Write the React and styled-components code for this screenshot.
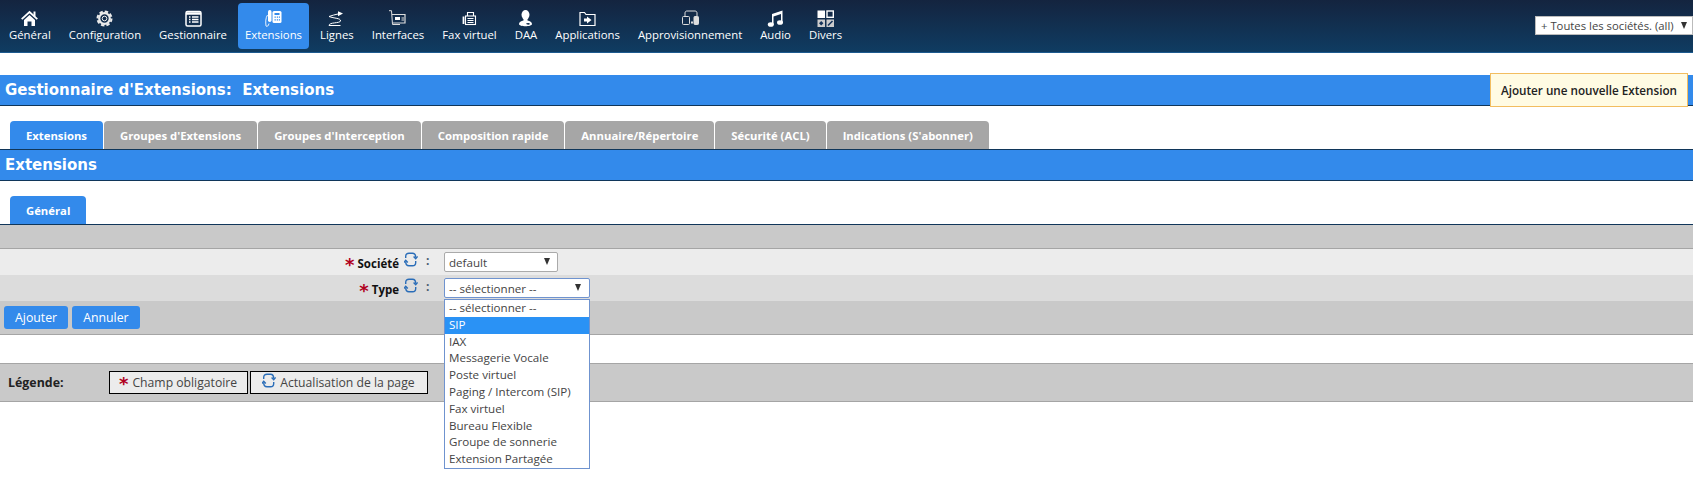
import React from 'react';
import styled, { createGlobalStyle } from 'styled-components';

const Global = createGlobalStyle`
  html, body {
    margin: 0;
    padding: 0;
    background: #fff;
    font-family: 'Open Sans', 'Noto Sans', sans-serif;
    font-size: 12px;
  }
`;

const Page = styled.div`
  width: 1693px;
  height: 477px;
  overflow: hidden;
  position: relative;
`;

const TopBar = styled.div`
  height: 52px;
  background: linear-gradient(#14243f, #0f3c62);
  border-bottom: 1px solid #1d5a8f;
  display: flex;
  justify-content: space-between;
  padding-left: 2px;
`;

const Nav = styled.div`
  display: flex;
  gap: 4px;
  align-items: flex-start;
  padding-top: 3px;
`;

const NavItem = styled.div`
  height: 46px;
  padding: 0 7px;
  border-radius: 4px;
  background: ${(p) => (p.$active ? '#338aeb' : 'transparent')};
  color: #fff;
  display: flex;
  flex-direction: column;
  align-items: center;
  white-space: nowrap;
  font-size: 11.35px;
  line-height: 16px;
  svg {
    display: block;
    width: 17px;
    height: 17px;
    margin-top: 7px;
  }
`;

const CompanySelect = styled.div`
  width: 158px;
  height: 19px;
  margin-top: 16px;
  box-sizing: border-box;
  background: #fff;
  border: 1px solid #bbb;
  color: #444;
  font-size: 11.3px;
  line-height: 17px;
  padding-left: 5px;
  display: flex;
  justify-content: space-between;
`;

const Caret = styled.span`
  width: 0;
  height: 0;
  border-left: 3.5px solid transparent;
  border-right: 3.5px solid transparent;
  border-top: 7px solid #333;
  margin: 5px ${(p) => p.$right || 5}px 0 0;
`;

const TitleBar = styled.div`
  margin-top: 22px;
  height: 30px;
  background: #338aeb;
  border-bottom: 1px solid #10365a;
  position: relative;
  color: #fff;
  font-family: 'DejaVu Sans', sans-serif;
  font-weight: 700;
  font-size: 15px;
  line-height: 30px;
  padding-left: 5px;
  white-space: pre;
`;

const AddButton = styled.div`
  position: absolute;
  right: 5px;
  top: -2px;
  width: 198px;
  height: 34px;
  box-sizing: border-box;
  background: #fffbe3;
  border: 1px solid #f2bd60;
  color: #222;
  font-family: 'Open Sans', sans-serif;
  font-size: 11.7px;
  font-weight: 600;
  line-height: 32px;
  text-align: center;
`;

const Tabs = styled.div`
  display: flex;
  gap: 1px;
  padding: 15px 0 0 10px;
`;

const Tab = styled.div`
  height: 28px;
  padding: 0 16px;
  border-radius: 4px 4px 0 0;
  background: ${(p) => (p.$active ? '#338aeb' : '#a6a6a6')};
  color: #fff;
  font-weight: 700;
  font-size: 11.3px;
  line-height: 29px;
  white-space: nowrap;
`;

const SectionBar = styled.div`
  height: 30px;
  background: #338aeb;
  border-top: 1px solid #10365a;
  border-bottom: 1px solid #10365a;
  color: #fff;
  font-family: 'DejaVu Sans', sans-serif;
  font-weight: 700;
  font-size: 15px;
  line-height: 30px;
  padding-left: 5px;
`;

const GreyBand = styled.div`
  height: 23px;
  background: #c9c9c9;
  border-top: 1px solid #10365a;
  border-bottom: 1px solid #a5a5a5;
`;

const FormRow = styled.div`
  height: 26px;
  background: ${(p) => (p.$dark ? '#dcdcdc' : '#ececec')};
  display: flex;
  align-items: center;
`;

const Label = styled.div`
  width: 418px;
  flex: none;
  display: flex;
  justify-content: flex-end;
  align-items: center;
  padding-top: 3px;
  font-weight: 700;
  font-size: 11.5px;
  color: #111;
  gap: 3px;
  svg {
    margin: -8px 0 0 2px;
  }
`;

const Star = styled.span`
  color: #b00020;
  font-size: 18px;
  line-height: 12px;
  padding-top: 3px;
  font-weight: 700;
  font-family: 'DejaVu Sans', sans-serif;
`;

const Colon = styled.span`
  font-weight: 700;
  color: #4a5a70;
  width: 3px;
  margin: -3px 15px 0 8px;
`;

const Select = styled.div`
  width: ${(p) => p.$width}px;
  height: 20px;
  box-sizing: border-box;
  background: #fff;
  border: 1px solid ${(p) => (p.$focus ? '#6f93cf' : '#aaa')};
  border-radius: 2px;
  color: #444;
  font-size: 11.6px;
  line-height: 20px;
  padding-left: 4px;
  display: flex;
  justify-content: space-between;
`;

const ButtonBand = styled.div`
  height: 33px;
  background: #c9c9c9;
  border-bottom: 1px solid #a5a5a5;
  display: flex;
  align-items: center;
  gap: 4px;
  padding-left: 4px;
`;

const Button = styled.div`
  height: 23px;
  padding: 0 11px;
  background: #338aeb;
  border-radius: 3px;
  color: #fff;
  font-size: 12.3px;
  line-height: 23px;
`;

const Legend = styled.div`
  margin-top: 28px;
  height: 37px;
  background: #c9c9c9;
  border-top: 1px solid #a5a5a5;
  border-bottom: 1px solid #a5a5a5;
  display: flex;
  align-items: center;
  padding-left: 8px;
`;

const LegendTitle = styled.div`
  width: 101px;
  font-weight: 700;
  font-size: 12.4px;
  color: #222;
`;

const LegendBox = styled.div`
  height: 23px;
  box-sizing: border-box;
  border: 1px solid #000;
  background: #ececec;
  color: #444;
  padding: 0 ${(p) => p.$right}px 0 ${(p) => p.$left}px;
  margin-right: 2px;
  display: flex;
  align-items: center;
  gap: 4px;
  font-size: 12.2px;
  white-space: nowrap;
  svg {
    margin-top: -4px;
  }
`;

const Dropdown = styled.div`
  position: absolute;
  left: 444px;
  top: 299px;
  width: 146px;
  box-sizing: border-box;
  background: #fff;
  border: 1px solid #6f93cf;
`;

const Option = styled.div`
  height: 16.8px;
  line-height: 16.8px;
  padding-left: 4px;
  font-size: 11.6px;
  color: ${(p) => (p.$selected ? '#fff' : '#444')};
  background: ${(p) => (p.$selected ? '#2a92f5' : 'transparent')};
`;

const Refresh = () => (
  <svg width="14" height="15" viewBox="0 0 14 15" fill="none" stroke="#2a6db8" strokeWidth="1.4">
    <path d="M1.700 6V4.500C1.700 2.500 3 1.200 5 1.200H8.500C10.500 1.200 11.700 2.500 11.700 5.500" />
    <path d="M9.600 4.500L11.700 6.800L13.600 4.500" />
    <path d="M11.700 9V10.500C11.700 12.500 10.500 13.800 8.500 13.800H5C3 13.800 1.700 12.500 1.700 9.500" />
    <path d="M-0.200 10.500L1.700 8.200L3.800 10.500" />
  </svg>
);

const icons = {
  home: (
    <svg viewBox="0 0 17 17" fill="#fff">
      <path d="M0.700 9.200L8.500 2L16.300 9.200" fill="none" stroke="#fff" strokeWidth="1.800" />
      <path d="M12.500 1.500H14.500V6.500H12.500z" />
      <path d="M3 10L8.500 5L14 10V16H10.500V11.500H6.500V16H3z" />
    </svg>
  ),
  gear: (
    <svg viewBox="0 0 17 17" fill="none" stroke="#ececec">
      <circle cx="8.500" cy="8.500" r="7" strokeWidth="2" strokeDasharray="3.500 2" />
      <circle cx="8.500" cy="8.500" r="5.300" strokeWidth="2.200" />
      <circle cx="8.500" cy="8.500" r="2.300" strokeWidth="1" />
    </svg>
  ),
  list: (
    <svg viewBox="0 0 17 17" fill="none" stroke="#fff">
      <rect x="1" y="1.500" width="15" height="14.500" rx="1.500" strokeWidth="1.500" />
      <path d="M1 3.500H16" strokeWidth="2.500" />
      <path d="M4 7H5.500M7 7H13.500M4 9.500H5.500M7 9.500H13.500M4 12H5.500M7 12H13.500" strokeWidth="1.300" />
    </svg>
  ),
  phone: (
    <svg viewBox="0 0 17 17" fill="#fff">
      <rect x="3" y="0" width="3.500" height="12" rx="1.700" />
      <path d="M2.500 5C0.500 8 0.500 12 1 16" fill="none" stroke="#fff" strokeWidth="0.900" />
      <path d="M1 16C2 17 3.500 16 4 13.500" fill="none" stroke="#fff" strokeWidth="0.900" />
      <rect x="7.500" y="1" width="9" height="12" rx="1.500" />
      <path d="M9.500 3H14.500V5H9.500zM9.500 6.500H10.800V7.800H9.500zM11.800 6.500H13V7.800H11.800zM13.800 6.500H15V7.800H13.800zM9.500 9.300H10.800V10.600H9.500zM11.800 9.300H13V10.600H11.800zM13.800 9.300H15V10.600H13.800z" fill="#338aeb" />
    </svg>
  ),
  route: (
    <svg viewBox="0 0 17 17" fill="none" stroke="#fff" strokeWidth="1">
      <path d="M1 6.500C4 5.500 7 4.500 10 4" />
      <path d="M10 1.300L15 3.500L10 6.300z" fill="#fff" stroke="none" />
      <path d="M1 6.500C6 8.500 13 8 12.500 11C12 13.500 1 12 1 15.500H12.500" />
    </svg>
  ),
  card: (
    <svg viewBox="0 0 17 17" fill="none" stroke="#ddd" strokeWidth="1">
      <path d="M0 0.700H2.500L3.500 14.500H11" />
      <path d="M3 4.500H16V13H3.500" strokeWidth="1.200" />
      <path d="M6 7H11V10H6z" fill="#fff" stroke="none" />
      <path d="M12.500 8H15M12.500 10H15" />
    </svg>
  ),
  fax: (
    <svg viewBox="0 0 17 17" fill="none" stroke="#fff" strokeWidth="1.100">
      <rect x="4.500" y="6" width="10" height="8.500" />
      <path d="M6.500 6V2.500H12.500V6" />
      <path d="M2.500 6.500V14" strokeWidth="1.800" />
      <path d="M6.500 8.500H12.500M6.500 10.500H12.500M6.500 12.500H12.500" />
    </svg>
  ),
  user: (
    <svg viewBox="0 0 17 17" fill="#fff">
      <ellipse cx="8.500" cy="4.800" rx="4" ry="4.800" />
      <path d="M6.500 8.500H10.500V10.500C13 11 15 12 15 14C15 17 2 17 2 14C2 12 4 11 6.500 10.500z" />
      <path d="M9 13.500C10.500 12.500 12.500 13 13 14C12 15 10 15 9 13.500z" fill="#14304f" />
    </svg>
  ),
  folder: (
    <svg viewBox="0 0 17 17" fill="none" stroke="#fff" strokeWidth="1.200">
      <path d="M1 2.500V15.500H16V4.500H7L5.500 2.500z" />
      <path d="M5 8.500H8V6.500L12.500 10L8 13.500V11.500H5z" fill="#fff" stroke="none" />
    </svg>
  ),
  devices: (
    <svg viewBox="0 0 17 17" fill="none" stroke="#ddd" strokeWidth="1">
      <path d="M3 6V3C3 1.500 4 1 5 1H13C14.500 1 15 2 15 3V6" />
      <rect x="0.500" y="6.500" width="7" height="8" rx="1" />
      <rect x="12" y="6.500" width="4.500" height="8" rx="0.800" fill="#ddd" />
      <path d="M9 12.500H11" strokeWidth="2" />
    </svg>
  ),
  music: (
    <svg viewBox="0 0 17 17" fill="#fff">
      <path d="M5 4L15.500 0.500V12.500H14V4L6.500 6.500V15H5z" />
      <ellipse cx="3.800" cy="14.500" rx="3" ry="2.300" />
      <ellipse cx="13" cy="12.500" rx="3" ry="2.300" />
    </svg>
  ),
  grid: (
    <svg viewBox="0 0 17 17">
      <rect x="0.500" y="0.500" width="7.500" height="7.500" fill="#fff" />
      <rect x="10" y="1" width="6.300" height="6.300" fill="none" stroke="#fff" strokeWidth="1.400" />
      <rect x="0.500" y="9.500" width="7.500" height="7.500" fill="#ccc" />
      <rect x="9.500" y="9.500" width="7.500" height="7.500" fill="#ccc" />
      <path d="M4.200 11L6.400 13.200L4.200 15.400L2 13.200z" fill="#14335a" />
      <path d="M11 15.500L15.500 11" stroke="#14335a" strokeWidth="1.600" />
    </svg>
  ),
};

const navItems = [
  ['Général', 'home'],
  ['Configuration', 'gear'],
  ['Gestionnaire', 'list'],
  ['Extensions', 'phone'],
  ['Lignes', 'route'],
  ['Interfaces', 'card'],
  ['Fax virtuel', 'fax'],
  ['DAA', 'user'],
  ['Applications', 'folder'],
  ['Approvisionnement', 'devices'],
  ['Audio', 'music'],
  ['Divers', 'grid'],
];

const tabs = [
  'Extensions',
  "Groupes d'Extensions",
  "Groupes d'Interception",
  'Composition rapide',
  'Annuaire/Répertoire',
  'Sécurité (ACL)',
  "Indications (S'abonner)",
];

const options = [
  '-- sélectionner --',
  'SIP',
  'IAX',
  'Messagerie Vocale',
  'Poste virtuel',
  'Paging / Intercom (SIP)',
  'Fax virtuel',
  'Bureau Flexible',
  'Groupe de sonnerie',
  'Extension Partagée',
];

const App = () => {
  return (
    <Page>
      <Global />
      <TopBar>
        <Nav>
          {navItems.map(([name, icon]) => (
            <NavItem key={name} $active={name === 'Extensions'}>
              {icons[icon]}
              {name}
            </NavItem>
          ))}
        </Nav>
        <CompanySelect>
          + Toutes les sociétés. (all)
          <Caret />
        </CompanySelect>
      </TopBar>

      <TitleBar>
        {"Gestionnaire d'Extensions:  Extensions"}
        <AddButton>Ajouter une nouvelle Extension</AddButton>
      </TitleBar>

      <Tabs>
        {tabs.map((tab, i) => (
          <Tab key={tab} $active={i === 0}>{tab}</Tab>
        ))}
      </Tabs>
      <SectionBar>Extensions</SectionBar>

      <Tabs>
        <Tab $active>Général</Tab>
      </Tabs>
      <GreyBand />

      <FormRow>
        <Label><Star>*</Star> Société <Refresh /></Label>
        <Colon>:</Colon>
        <Select $width={114}>default<Caret $right={7} /></Select>
      </FormRow>
      <FormRow $dark>
        <Label><Star>*</Star> Type <Refresh /></Label>
        <Colon>:</Colon>
        <Select $width={146} $focus>-- sélectionner --<Caret $right={8} /></Select>
      </FormRow>
      <ButtonBand>
        <Button>Ajouter</Button>
        <Button>Annuler</Button>
      </ButtonBand>

      <Legend>
        <LegendTitle>Légende:</LegendTitle>
        <LegendBox $left={9} $right={10}><Star>*</Star> Champ obligatoire</LegendBox>
        <LegendBox $left={11} $right={12}><Refresh /> Actualisation de la page</LegendBox>
      </Legend>

      <Dropdown>
        {options.map((o) => (
          <Option key={o} $selected={o === 'SIP'}>{o}</Option>
        ))}
      </Dropdown>
    </Page>
  );
};

export default App;
